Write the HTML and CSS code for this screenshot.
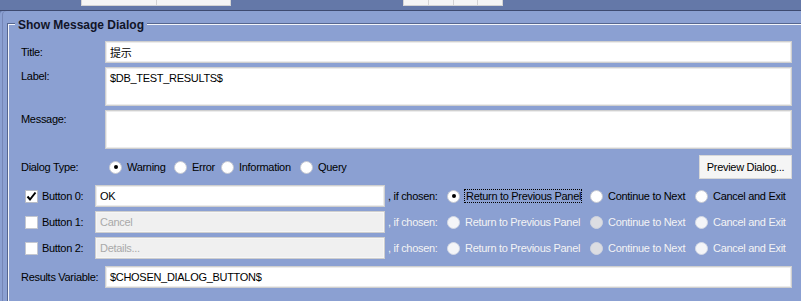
FILE: index.html
```html
<!DOCTYPE html>
<html>
<head>
<meta charset="utf-8">
<link rel="stylesheet" href="styles.css">
</head>
<body>
<div class="topbar">
  <div class="tabs t1"><span></span><span></span></div>
  <div class="tabs t2"><span></span><span></span><span></span><span></span></div>
</div>
<div class="panel">
  <div class="group">
    <div class="legend">Show Message Dialog</div>
    <div class="form">
      <div class="row r-title">
        <div class="lbl">Title:</div>
        <div class="field">提示</div>
      </div>
      <div class="row r-area">
        <div class="lbl top">Label:</div>
        <div class="field area">$DB_TEST_RESULTS$</div>
      </div>
      <div class="row r-area">
        <div class="lbl top">Message:</div>
        <div class="field area"></div>
      </div>
      <div class="row r-type">
        <div class="lbl wide">Dialog Type:</div>
        <div class="opt w-warn"><span class="radio on"></span><span>Warning</span></div>
        <div class="opt w-err"><span class="radio"></span><span>Error</span></div>
        <div class="opt w-info"><span class="radio"></span><span>Information</span></div>
        <div class="opt"><span class="radio"></span><span>Query</span></div>
        <div class="btn">Preview Dialog...</div>
      </div>
      <div class="row r-btn first">
        <span class="chk on"><svg width="11" height="11" viewBox="0 0 11 11"><path d="M1.5 5.5 L4 8.5 L9.5 1.5" fill="none" stroke="#000" stroke-width="2"/></svg></span>
        <span class="blabel">Button 0:</span>
        <div class="field bfield">OK</div>
        <span class="ifc">, if chosen:</span>
        <div class="opt w-ret"><span class="radio on"></span><span class="focus">Return to Previous Panel</span></div>
        <div class="opt w-cont"><span class="radio"></span><span>Continue to Next</span></div>
        <div class="opt"><span class="radio"></span><span>Cancel and Exit</span></div>
      </div>
      <div class="row r-btn">
        <span class="chk"></span>
        <span class="blabel">Button 1:</span>
        <div class="field bfield dis">Cancel</div>
        <span class="ifc dis-t">, if chosen:</span>
        <div class="opt w-ret"><span class="radio dis"></span><span class="dis-t">Return to Previous Panel</span></div>
        <div class="opt w-cont"><span class="radio dis2"></span><span class="dis-t">Continue to Next</span></div>
        <div class="opt"><span class="radio dis"></span><span class="dis-t">Cancel and Exit</span></div>
      </div>
      <div class="row r-btn">
        <span class="chk"></span>
        <span class="blabel">Button 2:</span>
        <div class="field bfield dis">Details...</div>
        <span class="ifc dis-t">, if chosen:</span>
        <div class="opt w-ret"><span class="radio dis"></span><span class="dis-t">Return to Previous Panel</span></div>
        <div class="opt w-cont"><span class="radio dis2"></span><span class="dis-t">Continue to Next</span></div>
        <div class="opt"><span class="radio dis"></span><span class="dis-t">Cancel and Exit</span></div>
      </div>
      <div class="row r-res">
        <div class="lbl">Results Variable:</div>
        <div class="field">$CHOSEN_DIALOG_BUTTON$</div>
      </div>
    </div>
  </div>
</div>
</body>
</html>
```
FILE: styles.css
```css
html, body {
  margin: 0;
  padding: 0;
}
body {
  width: 801px;
  height: 301px;
  overflow: hidden;
  background: #6478a8;
  font-family: "Liberation Sans", Arial, "Noto Sans CJK SC", sans-serif;
  font-size: 11px;
  color: #000;
}
.topbar {
  height: 10px;
  border-bottom: 1px solid #3e4a70;
  display: flex;
  align-items: flex-start;
}
.tabs {
  display: flex;
  height: 6px;
  background: #f5f5f5;
  border: 1px solid #d4d4d4;
  border-top: 0;
  box-sizing: border-box;
}
.tabs span {
  flex: 1;
  border-right: 1px solid #d4d4d4;
}
.tabs span:last-child {
  border-right: 0;
}
.t1 {
  margin-left: 81px;
  width: 150px;
}
.t2 {
  margin-left: 172px;
  width: 100px;
}
.panel {
  height: 290px;
  background: #8ba0d2;
  border-top-left-radius: 4px;
  box-shadow: inset 2px 0 0 #8ba0d2, inset 3px 0 0 #7586b6;
  overflow: hidden;
}
.group {
  margin: 12px 0 0 7px;
  width: 900px;
  height: 300px;
  border-top: 1px solid #56668f;
  border-left: 1px solid #56668f;
  box-shadow: inset 1px 1px 0 #f4f6fb;
  padding-left: 13px;
  box-sizing: border-box;
}
.legend {
  width: fit-content;
  margin: -6px 0 0 -6px;
  padding: 0 3px;
  background: #8ba0d2;
  font-weight: bold;
  font-size: 12px;
  line-height: 15px;
  color: #111428;
}
.form {
  width: 771px;
  margin-top: 8px;
  letter-spacing: -0.3px;
}
.row {
  display: flex;
  align-items: center;
}
.lbl {
  width: 84px;
  flex: none;
}
.lbl.top {
  align-self: flex-start;
  padding-top: 3px;
}
.lbl.wide {
  width: 88px;
}
.field {
  flex: 1;
  height: 22px;
  box-sizing: border-box;
  background: #fff;
  border: 1px solid #cfcfcf;
  box-shadow: inset 0 0 0 1px #ececec;
  padding: 0 4px;
  display: flex;
  align-items: center;
}
.field.area {
  height: 39px;
  align-items: flex-start;
  padding-top: 4px;
}
.r-area {
  margin-top: 4px;
}
.r-type {
  margin-top: 6px;
  height: 24px;
}
.opt {
  display: flex;
  align-items: center;
  gap: 5px;
  flex: none;
}
.w-warn { width: 65px; }
.w-err { width: 47px; }
.w-info { width: 79px; }
.w-ret { width: 143px; }
.w-cont { width: 105px; }
.radio {
  width: 13px;
  height: 13px;
  border-radius: 50%;
  background: #fff;
  border: 1px solid #c6c9d2;
  box-sizing: border-box;
  flex: none;
  display: flex;
  align-items: center;
  justify-content: center;
}
.radio.on::after {
  content: "";
  width: 4px;
  height: 4px;
  border-radius: 50%;
  background: #000;
}
.radio.dis {
  background: #f4f5f8;
  border-color: #d3d8e4;
}
.radio.dis2 {
  background: #dcdde2;
  border-color: #d0d4de;
}
.btn {
  margin-left: auto;
  width: 93px;
  height: 24px;
  box-sizing: border-box;
  background: #f5f5f5;
  border: 1px solid #d8d8d8;
  display: flex;
  align-items: center;
  justify-content: center;
}
.r-btn {
  margin-top: 4px;
}
.r-btn.first {
  margin-top: 6px;
}
.chk {
  width: 13px;
  height: 13px;
  margin-left: 4px;
  box-sizing: border-box;
  background: #fff;
  border: 1px solid #c4c7d0;
  flex: none;
  display: flex;
  align-items: center;
  justify-content: center;
}
.chk.on {
  border-color: #b8bcc6;
}
.blabel {
  width: 53px;
  margin-left: 4px;
  flex: none;
}
.field.bfield {
  flex: none;
  width: 290px;
}
.field.dis {
  background: #f0f0f0;
  box-shadow: inset 0 0 0 1px #f6f6f6;
  color: #a9a9a9;
}
.ifc {
  width: 59px;
  margin-left: 3px;
  flex: none;
}
.focus {
  border: 1px dotted #000;
  padding: 0 0 0 1px;
  margin-left: -1px;
  line-height: 12px;
}
.dis-t {
  color: #f2f4fa;
  text-shadow: 0 0 1px #8f9bbd;
}
.r-res {
  margin-top: 7px;
}
.r-res .field {
  height: 22px;
}
```
